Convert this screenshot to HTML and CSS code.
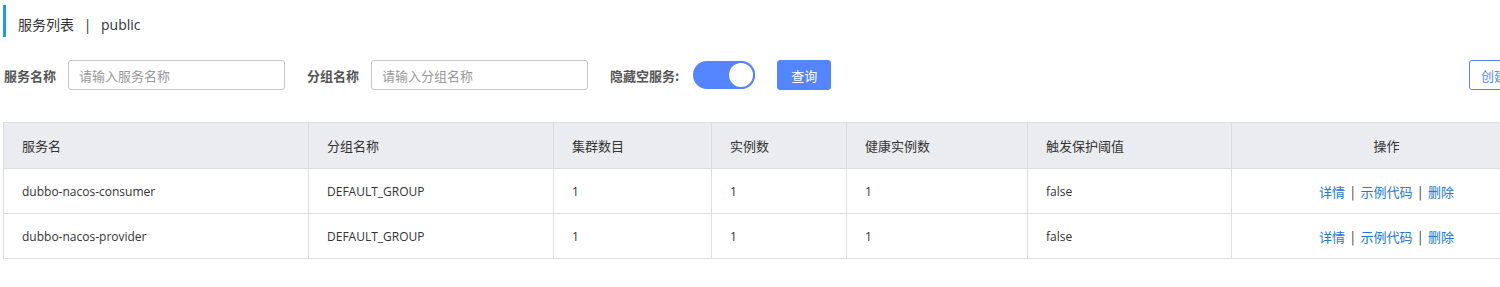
FILE: index.html
```html
<!doctype html>
<html lang="zh">
<head>
  <meta charset="utf-8">
  <title>服务列表</title>
  <link rel="stylesheet" href="styles.css">
</head>
<body>
<div class="page">
  <div class="page-title">服务列表 <span class="sep">|</span> public</div>

  <div class="search-bar">
    <div class="search-items">
      <label class="form-label">服务名称</label>
      <input class="form-input" type="text" placeholder="请输入服务名称">
      <label class="form-label">分组名称</label>
      <input class="form-input" type="text" placeholder="请输入分组名称">
      <label class="form-label">隐藏空服务:</label>
      <span class="switch"><span class="switch-knob"></span></span>
      <button class="btn btn-primary">查询</button>
    </div>
    <button class="btn btn-normal">创建服务</button>
  </div>

  <table class="service-table">
    <colgroup>
      <col style="width:305px">
      <col style="width:245px">
      <col style="width:158px">
      <col style="width:135px">
      <col style="width:181px">
      <col style="width:204px">
      <col style="width:310px">
    </colgroup>
    <thead>
      <tr>
        <th>服务名</th>
        <th>分组名称</th>
        <th>集群数目</th>
        <th>实例数</th>
        <th>健康实例数</th>
        <th>触发保护阈值</th>
        <th class="center">操作</th>
      </tr>
    </thead>
    <tbody>
      <tr>
        <td>dubbo-nacos-consumer</td>
        <td>DEFAULT_GROUP</td>
        <td>1</td>
        <td>1</td>
        <td>1</td>
        <td>false</td>
        <td class="center ops"><a href="#">详情</a><span class="bar">|</span><a href="#">示例代码</a><span class="bar">|</span><a href="#">删除</a></td>
      </tr>
      <tr>
        <td>dubbo-nacos-provider</td>
        <td>DEFAULT_GROUP</td>
        <td>1</td>
        <td>1</td>
        <td>1</td>
        <td>false</td>
        <td class="center ops"><a href="#">详情</a><span class="bar">|</span><a href="#">示例代码</a><span class="bar">|</span><a href="#">删除</a></td>
      </tr>
    </tbody>
  </table>
</div>
</body>
</html>
```

FILE: styles.css
```css
body {
  margin: 0;
  background-color: #fff;
  color: #333;
  font-family: "Noto Sans CJK SC", "Open Sans", sans-serif;
  font-size: 13px;
  overflow: hidden;
}

.page {
  width: 1542px;
  padding: 5px 0 0 3px;
}

.page-title {
  border-left: 3px solid #1e9fd8;
  padding-left: 12px;
  height: 32px;
  line-height: 40px;
  font-size: 14px;
  font-family: "Open Sans", "Noto Sans CJK SC", sans-serif;
  color: #333;
}
.page-title .sep {
  margin: 0 6px;
}

.search-bar {
  display: flex;
  align-items: center;
  justify-content: space-between;
  margin-top: 23px;
  padding-left: 1px;
}
.search-items {
  display: flex;
  align-items: center;
}

.form-label {
  font-weight: bold;
  color: #555;
  margin-right: 12px;
}
.form-input {
  width: 217px;
  height: 30px;
  box-sizing: border-box;
  border: 1px solid #c4c6cf;
  border-radius: 3px;
  padding: 0 10px;
  margin-right: 22px;
  font-family: inherit;
  font-size: 13px;
  color: #333;
  outline: none;
}
.form-input::placeholder {
  color: #999;
}

.switch {
  display: inline-block;
  position: relative;
  width: 62px;
  height: 28px;
  border-radius: 14px;
  background-color: #5584ff;
  margin-left: 2px;
  margin-right: 22px;
}
.switch-knob {
  position: absolute;
  right: 0;
  top: 0;
  width: 28px;
  height: 28px;
  box-sizing: border-box;
  border: 2px solid #5584ff;
  border-radius: 50%;
  background-color: #fff;
}

.btn {
  height: 30px;
  box-sizing: border-box;
  border-radius: 3px;
  font-family: inherit;
  font-size: 13px;
  cursor: pointer;
}
.btn-primary {
  width: 54px;
  border: 1px solid #5584ff;
  background-color: #5584ff;
  color: #fff;
}
.btn-normal {
  width: 76px;
  border: 1px solid #5584ff;
  background-color: #fff;
  color: #5584ff;
}

.service-table {
  margin-top: 32px;
  border-collapse: collapse;
  table-layout: fixed;
  border: 1px solid #dcdee3;
}
.service-table th,
.service-table td {
  border: 1px solid #dcdee3;
  padding: 0 18px;
  text-align: left;
  font-weight: normal;
  color: #333;
}
.service-table th {
  height: 45px;
  background-color: #ebecf0;
  font-size: 13px;
}
.service-table td {
  height: 44px;
  font-family: "Open Sans", "Noto Sans CJK SC", sans-serif;
  font-size: 12px;
}
.service-table .center {
  text-align: center;
}
.service-table .ops {
  font-family: "Noto Sans CJK SC", sans-serif;
  font-size: 13px;
}
.service-table a {
  color: #2077d8;
  text-decoration: none;
}
.service-table .bar {
  margin: 0 6px;
  color: #333;
}
```
